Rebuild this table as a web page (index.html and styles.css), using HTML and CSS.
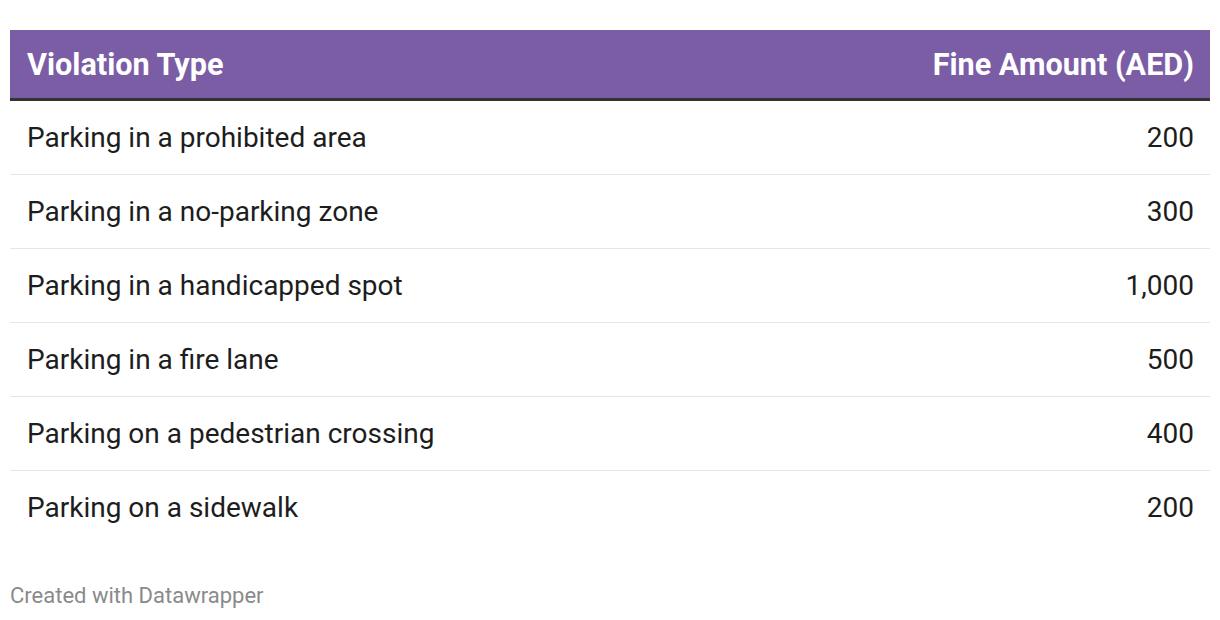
FILE: index.html
```html
<!DOCTYPE html>
<html>
<head>
<meta charset="utf-8">
<link rel="stylesheet" href="styles.css">
</head>
<body>
<div class="chart">
  <div class="fines">
    <div class="row head">
      <div class="cell">Violation Type</div>
      <div class="cell num">Fine Amount (AED)</div>
    </div>
    <div class="row">
      <div class="cell">Parking in a prohibited area</div>
      <div class="cell num">200</div>
    </div>
    <div class="row">
      <div class="cell">Parking in a no-parking zone</div>
      <div class="cell num">300</div>
    </div>
    <div class="row">
      <div class="cell">Parking in a handicapped spot</div>
      <div class="cell num">1,000</div>
    </div>
    <div class="row">
      <div class="cell">Parking in a fire lane</div>
      <div class="cell num">500</div>
    </div>
    <div class="row">
      <div class="cell">Parking on a pedestrian crossing</div>
      <div class="cell num">400</div>
    </div>
    <div class="row">
      <div class="cell">Parking on a sidewalk</div>
      <div class="cell num">200</div>
    </div>
  </div>
  <div class="footer">Created with Datawrapper</div>
</div>
</body>
</html>
```
FILE: styles.css
```css
html, body {
  margin: 0;
  padding: 0;
  background: #ffffff;
}
body {
  font-family: Roboto, "Liberation Sans", sans-serif;
}
.chart {
  padding: 30px 10px 0 10px;
}
.fines {
  display: flex;
  flex-direction: column;
}
.row {
  display: flex;
  align-items: center;
  justify-content: space-between;
  height: 73px;
  padding: 0 16px 0 17px;
  border-bottom: 1px solid #e6e6e6;
  color: #1d1d1d;
  font-size: 28px;
}
.row:last-child {
  border-bottom: none;
}
.row.head {
  height: 68px;
  background: #7b5da6;
  color: #ffffff;
  font-weight: 700;
  font-size: 30.6px;
  border-bottom: 3px solid #333333;
}
.num {
  text-align: right;
}
.footer {
  margin-top: 39px;
  font-size: 22px;
  color: #8a8a8a;
}
```
